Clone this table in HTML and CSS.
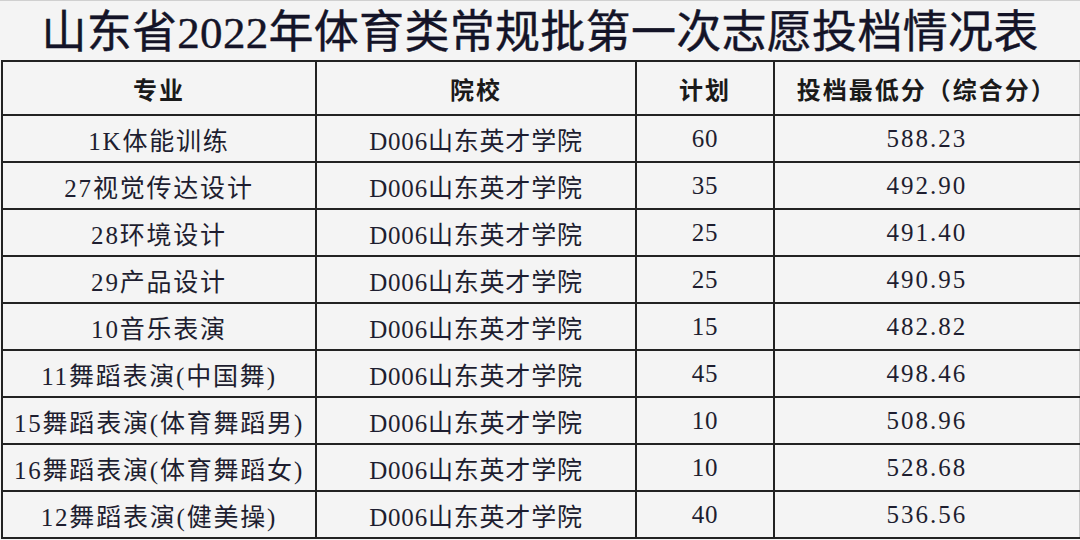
FILE: index.html
```html
<!DOCTYPE html>
<html lang="zh">
<head>
<meta charset="utf-8">
<link rel="stylesheet" href="styles.css">
</head>
<body>
<div class="sheet">
  <h1 class="title">山东省2022年体育类常规批第一次志愿投档情况表</h1>
  <table class="grid">
    <colgroup>
      <col class="c1"><col class="c2"><col class="c3"><col class="c4">
    </colgroup>
    <thead>
      <tr><th>专业</th><th>院校</th><th>计划</th><th>投档最低分（综合分）</th></tr>
    </thead>
    <tbody>
      <tr><td class="major">1K体能训练</td><td>D006山东英才学院</td><td>60</td><td class="num">588.23</td></tr>
      <tr><td class="major">27视觉传达设计</td><td>D006山东英才学院</td><td>35</td><td class="num">492.90</td></tr>
      <tr><td class="major">28环境设计</td><td>D006山东英才学院</td><td>25</td><td class="num">491.40</td></tr>
      <tr><td class="major">29产品设计</td><td>D006山东英才学院</td><td>25</td><td class="num">490.95</td></tr>
      <tr><td class="major">10音乐表演</td><td>D006山东英才学院</td><td>15</td><td class="num">482.82</td></tr>
      <tr><td class="major">11舞蹈表演(中国舞)</td><td>D006山东英才学院</td><td>45</td><td class="num">498.46</td></tr>
      <tr><td class="major">15舞蹈表演(体育舞蹈男)</td><td>D006山东英才学院</td><td>10</td><td class="num">508.96</td></tr>
      <tr><td class="major">16舞蹈表演(体育舞蹈女)</td><td>D006山东英才学院</td><td>10</td><td class="num">528.68</td></tr>
      <tr><td class="major">12舞蹈表演(健美操)</td><td>D006山东英才学院</td><td>40</td><td class="num">536.56</td></tr>
    </tbody>
  </table>
</div>
</body>
</html>
```
FILE: styles.css
```css
html, body {
  margin: 0;
  padding: 0;
  background: #f3f3f3;
}
.sheet {
  width: 1080px;
  height: 540px;
  box-sizing: border-box;
  border-top: 1px solid #d0d0d0;
  background: #f4f4f4;
  overflow: hidden;
}
.title {
  margin: 0;
  height: 59px;
  padding-top: 7px;
  box-sizing: border-box;
  text-align: center;
  font-family: "Liberation Serif", "Noto Sans CJK SC", serif;
  font-weight: normal;
  font-size: 45px;
  line-height: 50px;
  color: #141428;
  letter-spacing: 0.3px;
  -webkit-text-stroke: 0.4px #141428;
}
.grid {
  margin-left: 1px;
  width: 1077px;
  border-collapse: collapse;
  table-layout: fixed;
  font-family: "Liberation Serif", "Noto Sans CJK SC", serif;
  color: #1e1e30;
}
.c1 { width: 314px; }
.c2 { width: 320px; }
.c3 { width: 138px; }
.c4 { width: 305px; }
.grid th, .grid td {
  border: 2px solid #222;
  padding: 0;
  text-align: center;
  white-space: nowrap;
}
.grid th:last-child, .grid td:last-child {
  border-right: 1px solid #c8c8c8;
}
.grid th {
  height: 52px;
  font-family: "Noto Sans CJK SC", sans-serif;
  font-weight: bold;
  font-size: 24px;
  letter-spacing: 2px;
  color: #1a1a1a;
}
.grid td {
  height: 45px;
  font-size: 25px;
  letter-spacing: 0.8px;
}
.grid td.major {
  letter-spacing: 1.8px;
}
.grid td.num {
  letter-spacing: 2px;
}
```
